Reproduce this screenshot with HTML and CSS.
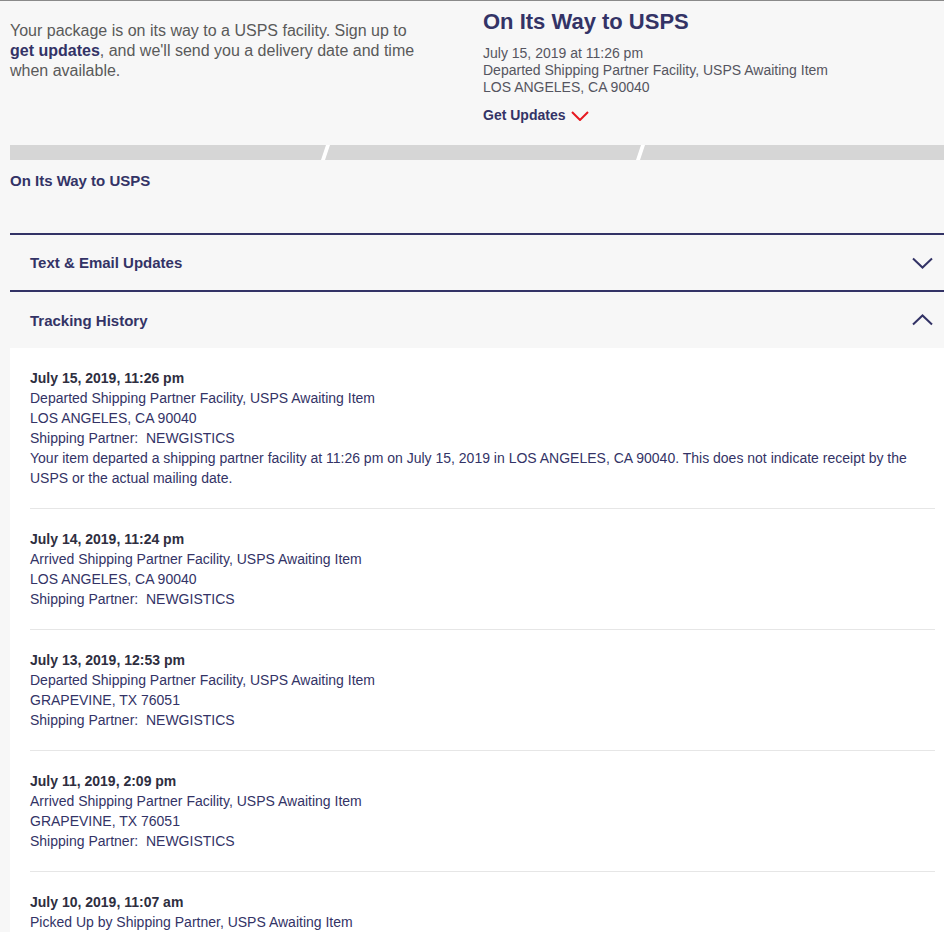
FILE: index.html
```html
<!DOCTYPE html>
<html lang="en">
<head>
<meta charset="utf-8">
<title>USPS Tracking</title>
<link rel="stylesheet" href="styles.css">
</head>
<body>
<div class="page">
  <section class="summary">
    <p class="intro">Your package is on its way to a USPS facility. Sign up to <b class="link">get updates</b>, and we'll send you a delivery date and time when available.</p>
    <div class="status">
      <h1 class="status-title">On Its Way to USPS</h1>
      <div class="status-detail">
        <div>July 15, 2019 at 11:26 pm</div>
        <div>Departed Shipping Partner Facility, USPS Awaiting Item</div>
        <div>LOS ANGELES, CA 90040</div>
      </div>
      <div class="get-updates">Get Updates
        <svg class="chev-red" width="18" height="10" viewBox="0 0 18 10"><polyline points="1,1 9,9 17,1" fill="none" stroke="#e71921" stroke-width="2"/></svg>
      </div>
    </div>
  </section>

  <svg class="progress" width="934" height="15" viewBox="0 0 934 15" preserveAspectRatio="none">
    <rect x="0" y="0" width="934" height="15" fill="#ffffff"/>
    <polygon points="0,0 316,0 311,15 0,15" fill="#d6d6d6"/>
    <polygon points="320,0 631,0 626,15 315,15" fill="#d6d6d6"/>
    <polygon points="635,0 934,0 934,15 630,15" fill="#d6d6d6"/>
  </svg>

  <div class="progress-label">On Its Way to USPS</div>

  <div class="accordion">
    <div class="acc-header">
      <span>Text &amp; Email Updates</span>
      <svg class="chev" width="21" height="12" viewBox="0 0 21 12"><polyline points="1,1.5 10.5,10.5 20,1.5" fill="none" stroke="#333366" stroke-width="2"/></svg>
    </div>
    <div class="acc-header acc-open">
      <span>Tracking History</span>
      <svg class="chev" width="21" height="12" viewBox="0 0 21 12"><polyline points="1,10.5 10.5,1.5 20,10.5" fill="none" stroke="#333366" stroke-width="2"/></svg>
    </div>
    <div class="history">
      <div class="entry">
        <div class="entry-date">July 15, 2019, 11:26 pm</div>
        <div>Departed Shipping Partner Facility, USPS Awaiting Item</div>
        <div>LOS ANGELES, CA 90040</div>
        <div>Shipping Partner:&nbsp; NEWGISTICS</div>
        <div>Your item departed a shipping partner facility at 11:26 pm on July 15, 2019 in LOS ANGELES, CA 90040. This does not indicate receipt by the USPS or the actual mailing date.</div>
      </div>
      <div class="entry">
        <div class="entry-date">July 14, 2019, 11:24 pm</div>
        <div>Arrived Shipping Partner Facility, USPS Awaiting Item</div>
        <div>LOS ANGELES, CA 90040</div>
        <div>Shipping Partner:&nbsp; NEWGISTICS</div>
      </div>
      <div class="entry">
        <div class="entry-date">July 13, 2019, 12:53 pm</div>
        <div>Departed Shipping Partner Facility, USPS Awaiting Item</div>
        <div>GRAPEVINE, TX 76051</div>
        <div>Shipping Partner:&nbsp; NEWGISTICS</div>
      </div>
      <div class="entry">
        <div class="entry-date">July 11, 2019, 2:09 pm</div>
        <div>Arrived Shipping Partner Facility, USPS Awaiting Item</div>
        <div>GRAPEVINE, TX 76051</div>
        <div>Shipping Partner:&nbsp; NEWGISTICS</div>
      </div>
      <div class="entry">
        <div class="entry-date">July 10, 2019, 11:07 am</div>
        <div>Picked Up by Shipping Partner, USPS Awaiting Item</div>
        <div>GRAPEVINE, TX 76051</div>
        <div>Shipping Partner:&nbsp; NEWGISTICS</div>
      </div>
    </div>
  </div>
</div>
</body>
</html>
```

FILE: styles.css
```css
html, body {
  margin: 0;
  padding: 0;
  background: #f7f7f7;
}
body {
  font-family: "Liberation Sans", Arial, sans-serif;
  overflow: hidden;
}
.page {
  border-top: 1px solid #8a8a8a;
  padding-left: 10px;
  background: #f7f7f7;
  min-height: 940px;
}
.summary {
  display: grid;
  grid-template-columns: 473px 1fr;
}
.intro {
  margin: 20px 0 0;
  font-size: 16px;
  line-height: 20px;
  color: #5a5a5a;
  max-width: 425px;
}
.link {
  color: #333366;
  font-weight: bold;
}
.status {
  padding-top: 8px;
}
.status-title {
  margin: 0;
  font-size: 22px;
  line-height: 26px;
  font-weight: bold;
  color: #333366;
}
.status-detail {
  margin-top: 10px;
  font-size: 14px;
  line-height: 17px;
  color: #555560;
}
.get-updates {
  margin-top: 11px;
  font-size: 14px;
  line-height: 17px;
  font-weight: bold;
  color: #333366;
  display: flex;
  align-items: center;
  gap: 6px;
}
.chev-red {
  display: block;
}
.progress {
  display: block;
  margin-top: 21px;
}
.progress-label {
  margin-top: 12px;
  font-size: 15px;
  line-height: 18px;
  font-weight: bold;
  color: #333366;
}
.accordion {
  margin-top: 43px;
}
.acc-header {
  border-top: 2px solid #333366;
  height: 55px;
  padding: 0 11px 0 20px;
  display: flex;
  align-items: center;
  justify-content: space-between;
  font-size: 15px;
  font-weight: bold;
  color: #333366;
}
.acc-open {
  height: 56px;
}
.chev {
  display: block;
}
.history {
  background: #ffffff;
  padding: 0 9px 0 20px;
}
.entry {
  padding: 20px 0;
  border-bottom: 1px solid #e6e6e6;
  font-size: 14px;
  line-height: 20px;
  color: #333366;
}
.entry-date {
  font-weight: bold;
  color: #2e2e40;
}
```
